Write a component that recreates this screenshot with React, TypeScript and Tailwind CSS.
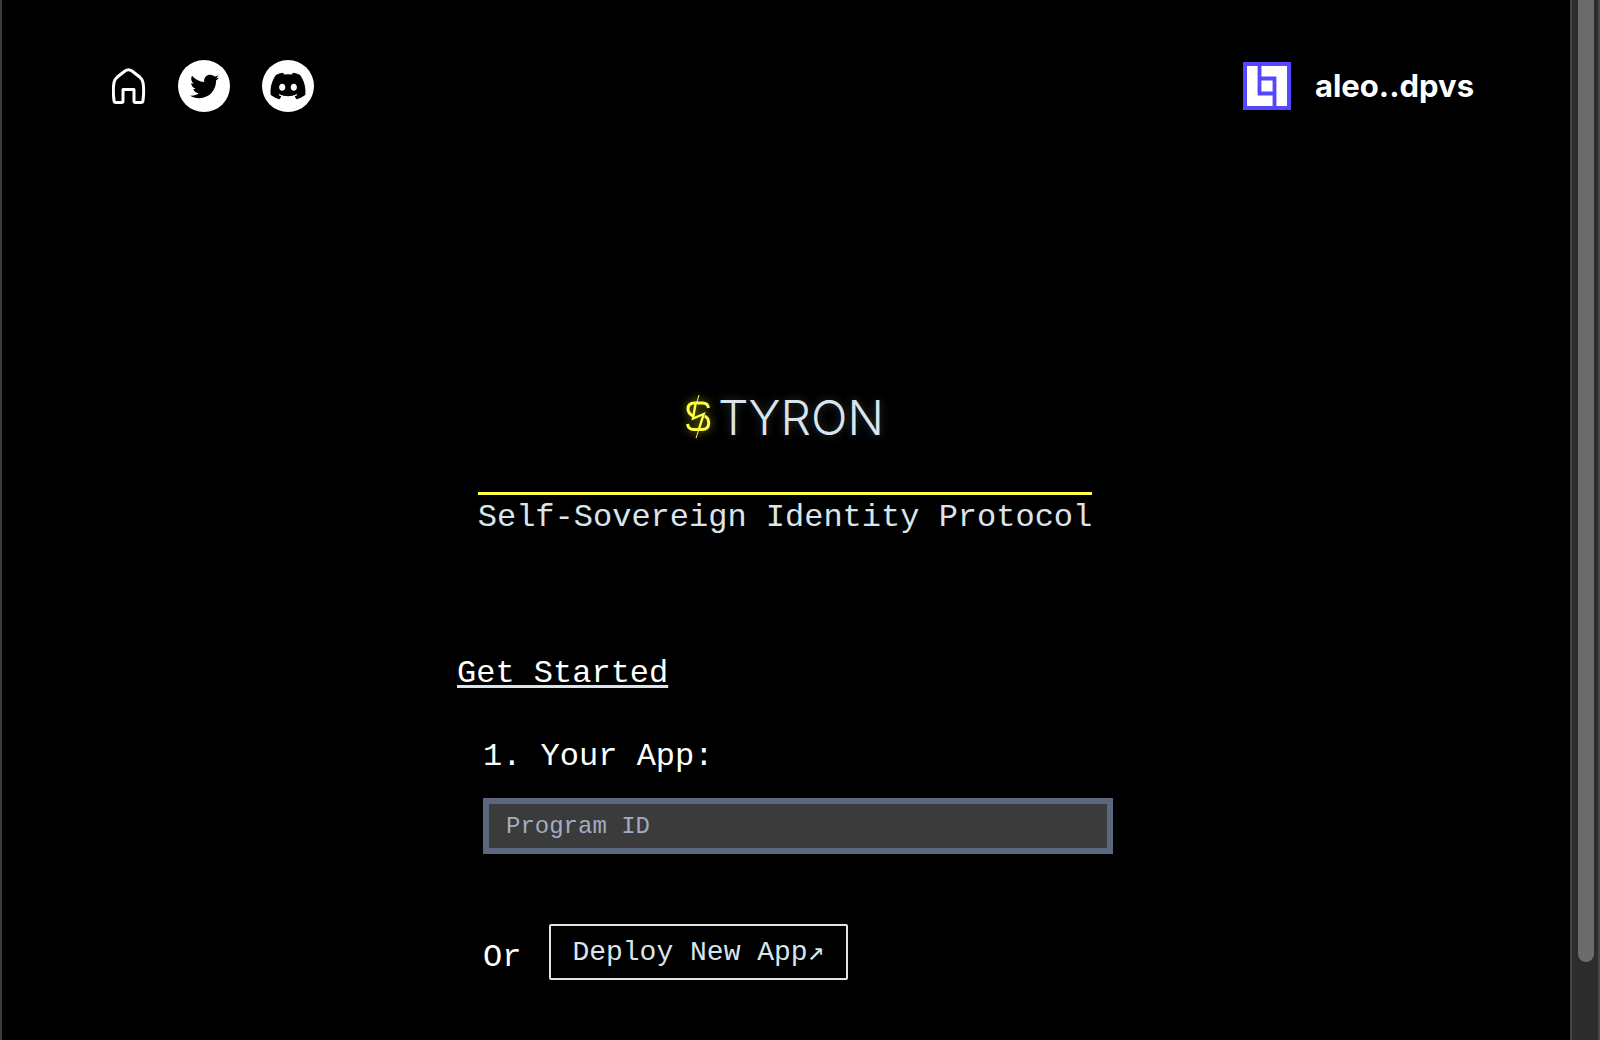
import React from "react";
import { FaDiscord, FaTwitter } from "react-icons/fa";

function HomeIcon() {
  return (
    <svg viewBox="0 0 34 38" className="h-[38px] w-[34px]" fill="none" stroke="white" strokeWidth="3" strokeLinejoin="round">
      <path d="M2 33.500C1.300 28 1.200 20 2 15.500c.4-2.500 1.200-3.700 3-5.200L13 4c2.400-1.700 4.600-1.700 7 0l8 6.300c1.800 1.500 2.600 2.700 3 5.200.8 4.500.7 12.500 0 18-.2 1.500-.8 2-2 2h-5.500c-1.200 0-1.500-.5-1.500-1.500V22.500H11V34c0 1-.3 1.500-1.500 1.500H4c-1.200 0-1.800-.5-2-2z" />
    </svg>
  );
}

function WalletAvatar() {
  return (
    <svg viewBox="0 0 48 48" className="size-12" aria-hidden="true">
      <rect width="48" height="48" fill="#5546ff" />
      <rect x="4" y="4" width="40" height="40" fill="white" />
      <path d="M16.500 4v27.500h15M18 16.500h13.500V44" fill="none" stroke="#5546ff" strokeWidth="3.800" />
    </svg>
  );
}

function DollarBolt() {
  return (
    <svg viewBox="0 0 24 46" className="h-[46px] w-6 overflow-visible drop-shadow-[0_0_4px_#8a8a10]" fill="none" stroke="#ffff4a" strokeWidth="3" aria-hidden="true">
      <path d="M22.500 13c-.5-3.500-2.500-5-6-5H8.500c-4.500 0-6.500 2.500-6.500 6 0 3 1.500 5 5 7" />
      <path d="M1.500 29c.5 3.500 2.500 5.500 6 5.500h8.500c4.500 0 6.700-2.500 6.700-6.500 0-3-1.200-5.500-4-7" />
      <path d="M9.500 9L7 23.500l10.700-4.500L13 34" strokeWidth="2.400" strokeLinejoin="miter" />
      <path d="M10.500 8.500L13 0M13 34L10 43" strokeWidth="1" />
    </svg>
  );
}

export default function App() {
  return (
    <div className="flex min-h-screen border-x-2 border-l-[#3c3c3c] border-r-[#484848] bg-black font-['Liberation_Mono',monospace] text-white">
      <div className="flex min-w-0 flex-1 flex-col">
        <header className="flex items-center justify-between pt-[60px] pr-24 pl-[110px]">
          <nav className="flex items-center gap-8">
            <a href="#home" aria-label="Home">
              <HomeIcon />
            </a>
            <a href="#twitter" aria-label="Twitter" className="flex size-[52px] items-center justify-center rounded-full bg-white text-black">
              <FaTwitter size={29} />
            </a>
            <a href="#discord" aria-label="Discord" className="flex size-[52px] items-center justify-center rounded-full bg-white text-black">
              <FaDiscord size={38} />
            </a>
          </nav>
          <button type="button" className="flex items-center gap-6 font-['Inter',sans-serif] text-[31px] leading-10 font-bold">
            <WalletAvatar />
            aleo..dpvs
          </button>
        </header>

        <main className="flex flex-col items-center pr-0.5 pb-12">
          <div className="mt-[280px] flex h-[52px] items-center gap-2">
            <DollarBolt />
            <span className="font-['Inter',sans-serif] text-[48px] leading-[48px] font-light text-[#dbe4eb] [font-kerning:none] [text-shadow:0_0_10px_#30383f]">TYRON</span>
          </div>
          <h1 className="mt-12 border-t-[3px] border-[#ffff4a] text-[32px] leading-[46px] text-[#dbe4eb]">
            Self-Sovereign Identity Protocol
          </h1>

          <form className="mt-28 w-full max-w-[656px]">
            <h2 className="text-[32px] leading-[42px] underline decoration-[#dbe4eb] decoration-[3px] underline-offset-3 [text-decoration-skip-ink:none]">Get Started</h2>
            <div className="pl-[26px]">
              <label htmlFor="program" className="mt-[42px] block text-[32px] leading-10">
                1. Your App:
              </label>
              <input
                id="program"
                type="text"
                placeholder="Program ID"
                className="mt-[21px] block h-14 w-full border-[6px] border-[#5b677d] bg-[#3b3b3b] px-[17px] text-2xl text-white outline-none placeholder:text-[#a0aec0]"
              />
              <div className="mt-[70px] flex items-center gap-7">
                <span className="pt-3 text-[32px] leading-10">Or</span>
                <button type="button" className="h-14 rounded-xs border-2 border-[#dbe4eb] px-[21px] pt-0.5 text-[28px] leading-10 text-[#dbe4eb]">
                  Deploy New App↗
                </button>
              </div>
            </div>
          </form>
        </main>
      </div>

      <div className="flex w-7 flex-col border-l-2 border-[#464646] bg-[#2c2c2c] px-1.5">
        <div className="w-4 flex-[37] rounded-t-sm rounded-b-full bg-[#6b6b6b]" />
        <div className="flex-[3]" />
      </div>
    </div>
  );
}
